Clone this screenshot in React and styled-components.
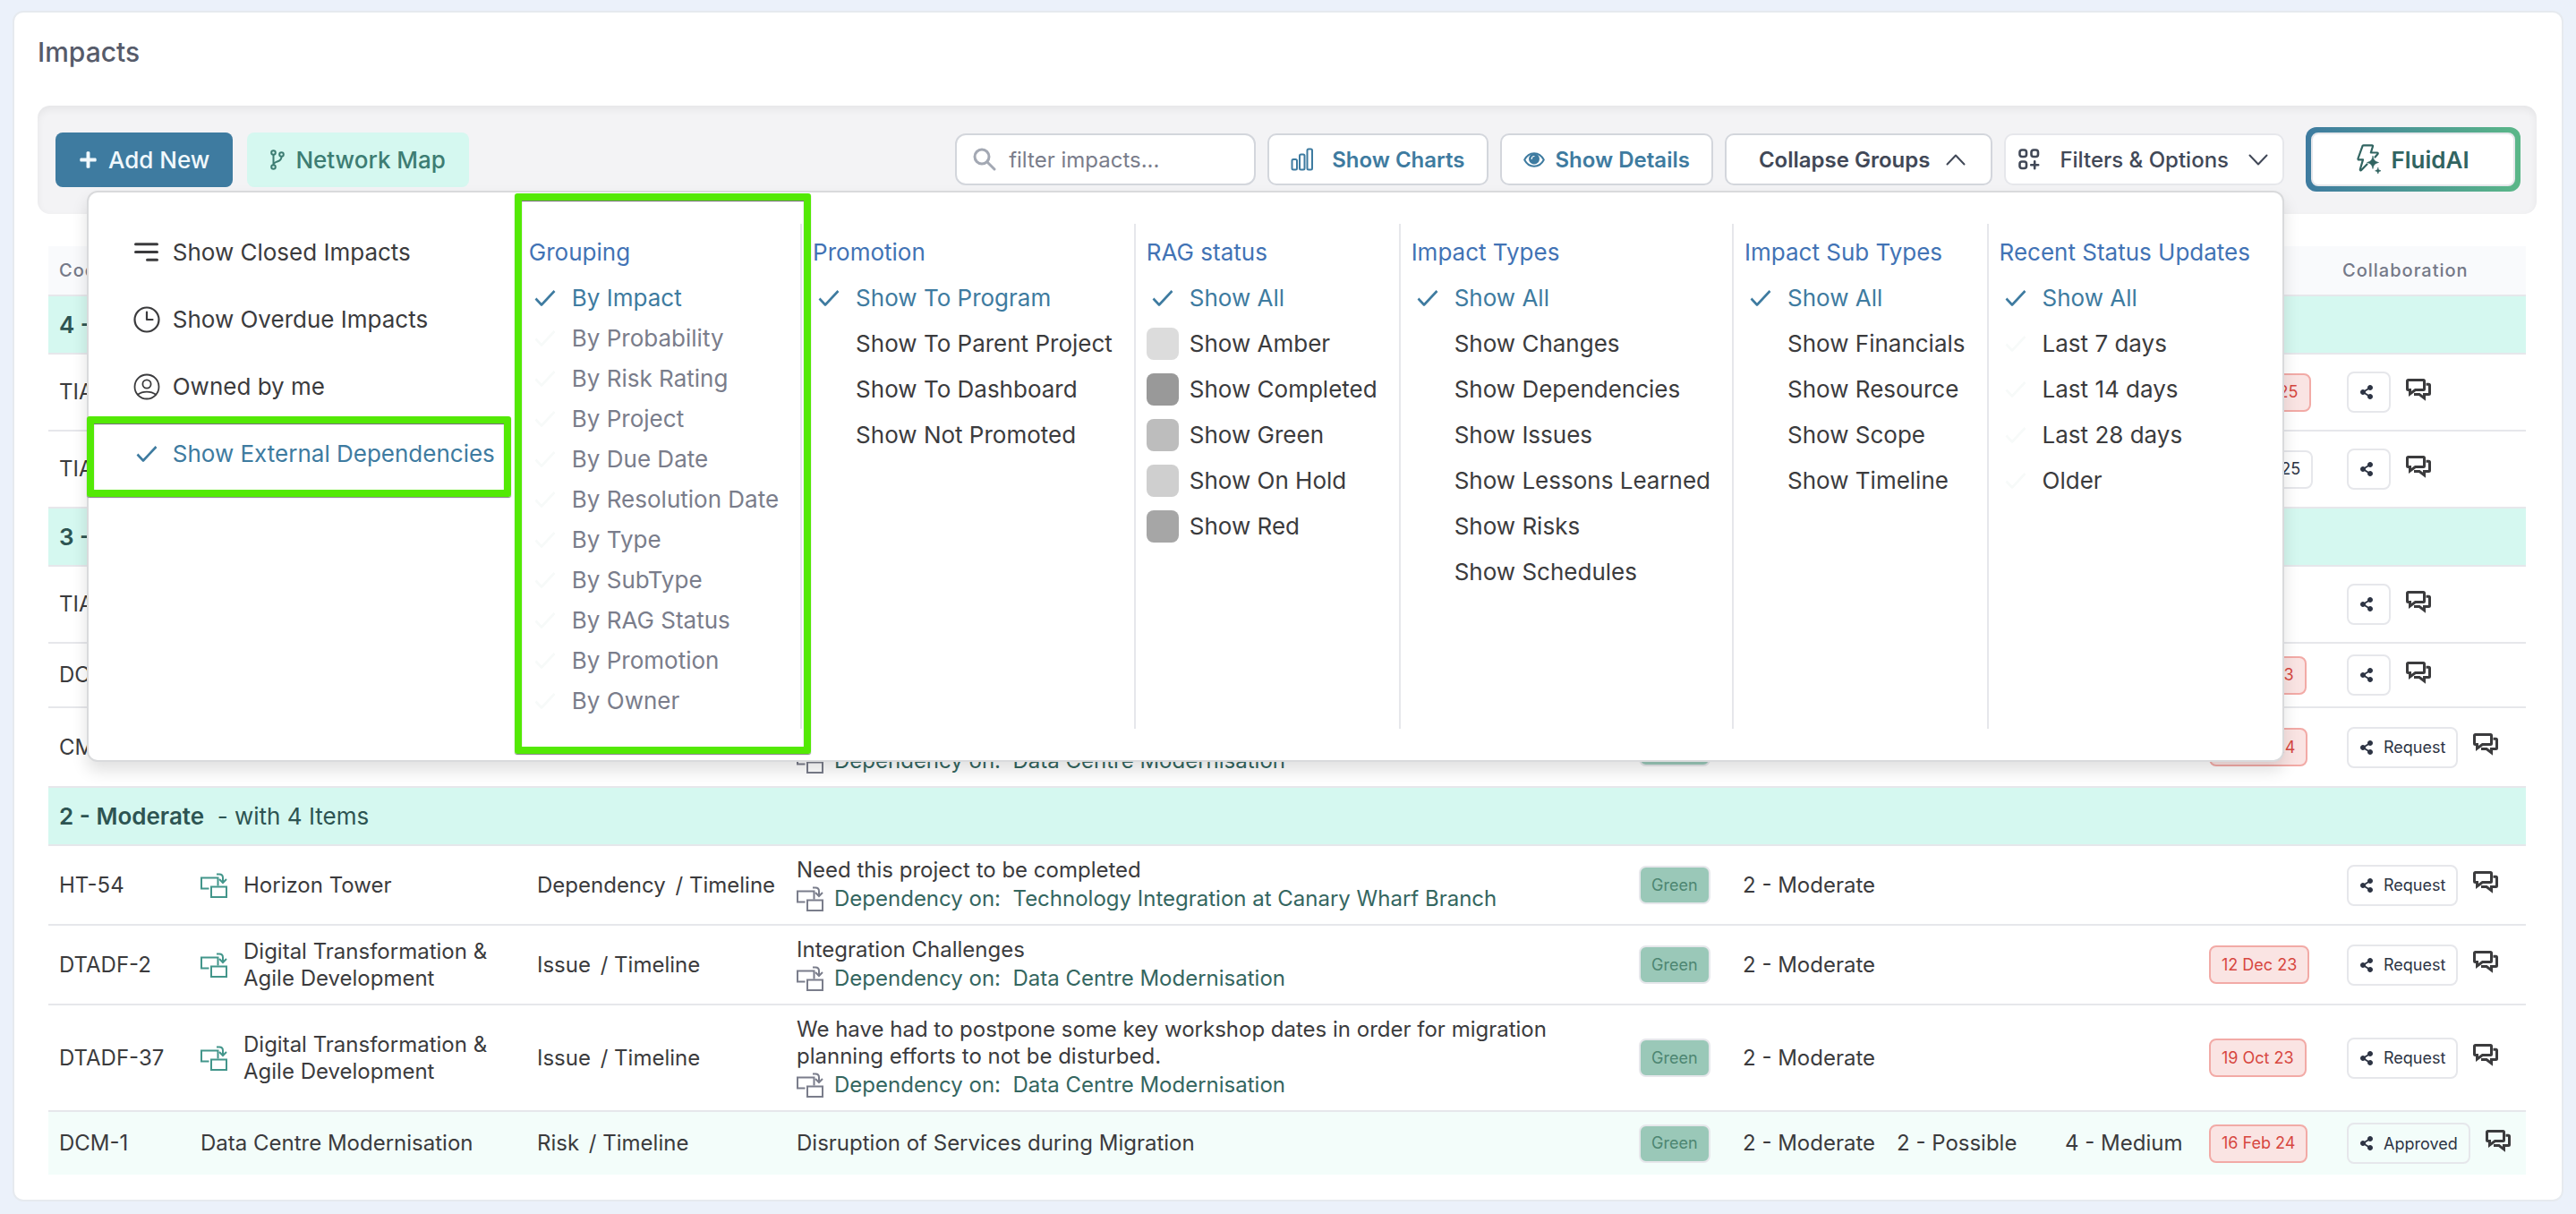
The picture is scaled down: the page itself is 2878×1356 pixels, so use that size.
import React, { useState } from 'react';
import styled, { createGlobalStyle, css } from 'styled-components';
import { FaPlus, FaShareAlt } from 'react-icons/fa';

const GlobalStyle = createGlobalStyle`
  * {
    box-sizing: border-box;
  }

  body {
    margin: 0;
    background: #ebf1fa;
    color: #3b3b3d;
    font-family: Inter, 'Liberation Sans', sans-serif;
    font-size: 24px;
  }

  button,
  input {
    font-family: inherit;
  }

  button {
    cursor: pointer;
  }
`;

// page card
const Page = styled.main`
  margin: 12px 14px;
  padding: 0 28px 28px 26px;
  border: 2px solid #e6eaef;
  border-radius: 12px;
  background: #fff;
`;

const Title = styled.h1`
  margin: 0;
  padding: 26px 0 42px;
  color: #565b6a;
  font-size: 30px;
  font-weight: 500;
  line-height: 36px;
`;

// toolbar
const Toolbar = styled.div`
  display: flex;
  align-items: center;
  justify-content: space-between;
  padding: 24px 18px 25px 20px;
  border-radius: 14px;
  background: #f3f3f5;
  box-shadow: inset 0 4px 8px rgba(0, 0, 0, 0.06);
`;

const ToolbarGroup = styled.div`
  display: flex;
  align-items: center;
  gap: ${({ $gap }) => $gap}px;
`;

const AddButton = styled.button`
  display: flex;
  align-items: center;
  gap: 12px;
  height: 61px;
  padding: 0 26px;
  border: 0;
  border-radius: 8px;
  background: #3e7ba0;
  color: #f0f8fc;
  font-size: 26px;
  font-weight: 500;
`;

const MapButton = styled(AddButton)`
  background: #d5f8f0;
  color: #3d7d73;
`;

const SearchBox = styled.label`
  display: flex;
  align-items: center;
  gap: 14px;
  width: 336px;
  height: 58px;
  padding: 0 18px;
  border: 2px solid #d3d6dc;
  border-radius: 12px;
  background: #fff;
  color: #a3a8b3;

  input {
    flex: 1;
    min-width: 0;
    padding: 0;
    border: 0;
    outline: 0;
    background: none;
    color: #3b3b3d;
    font-size: 24px;
  }

  input::placeholder {
    color: #7a7d8b;
    opacity: 1;
  }
`;

const ToolButton = styled.button`
  display: flex;
  align-items: center;
  justify-content: center;
  gap: ${({ $gap }) => $gap || 12}px;
  height: 58px;
  padding: 0 24px;
  border: 2px solid #d3d6dc;
  border-radius: 10px;
  background: #fff;
  color: ${({ $blue }) => ($blue ? '#3e7ba0' : '#414857')};
  font-size: 24px;
  font-weight: 600;
`;

const CollapseButton = styled(ToolButton)`
  padding: 0 28px 0 36px;
`;

const FilterButton = styled(ToolButton)`
  padding: 0 16px 0 14px;
  border-color: #e6e7eb;
  font-weight: 500;
`;

const FilterWrap = styled.div`
  position: relative;
  margin-right: 11px;
`;

const FluidFrame = styled.div`
  padding: 6px;
  border-radius: 12px;
  background: linear-gradient(90deg, #3e7ba0, #5ab788);
`;

const FluidButton = styled.button`
  display: flex;
  align-items: center;
  justify-content: center;
  gap: 10px;
  width: 228px;
  height: 60px;
  padding: 0;
  border: 2px solid #e6e7eb;
  border-radius: 8px;
  background: #fff;
  color: #316461;
  font-size: 26px;
  font-weight: 600;
`;

// filters panel, hangs under the Filters & Options button
const Panel = styled.div`
  position: absolute;
  top: calc(100% + 6px);
  right: 0;
  z-index: 10;
  display: flex;
  width: max-content;
  padding: 35px 0;
  border: 2px solid #d9dadc;
  border-radius: 12px;
  background: #fff;
  box-shadow: 0 10px 18px rgba(0, 0, 0, 0.12);
`;

const QuickColumn = styled.div`
  display: flex;
  flex-direction: column;
  gap: 24px;
  padding-top: 6px;
`;

const Column = styled.section`
  position: relative;
  min-height: 564px;
  padding: 6px 24px 9px 12px;
  border-right: 2px solid #e6e7eb;

  &:last-child {
    padding-right: 36px;
    border-right: 0;
  }
`;

const ColumnTitle = styled.h2`
  margin: 0;
  color: #4273b5;
  font-size: 26px;
  font-weight: 400;
  line-height: 51px;
`;

const OptionList = styled.div`
  padding-top: ${({ $dense }) => ($dense ? 3 : 0)}px;
`;

const Option = styled.button`
  display: flex;
  align-items: center;
  gap: 12px;
  height: ${({ $dense }) => ($dense ? 45 : 51)}px;
  padding: 0;
  border: 0;
  background: none;
  color: ${({ $active, $dense }) =>
    $active ? '#3e7ba0' : $dense ? '#7a7d8b' : '#3b3b3d'};
  font-size: 26px;
  white-space: nowrap;
`;

const QuickOption = styled(Option)`
  position: relative;
  gap: 14px;
  width: 100%;
  padding: 0 26px 0 50px;
`;

const IconSlot = styled.span`
  display: flex;
  align-items: center;
  justify-content: center;
  width: ${({ $width }) => $width || 36}px;
  color: ${({ $faint }) => ($faint ? '#f7faf9' : 'inherit')};
`;

const Swatch = styled.span`
  width: 36px;
  height: 36px;
  border-radius: 8px;
  background: ${({ $color }) => $color};
`;

// green highlight frames
const frame = css`
  position: absolute;
  border: 8px solid #53e905;
  border-radius: 3px;
  box-shadow: 0 1px 1px rgba(0, 0, 0, 0.5), inset 0 1px 1px rgba(0, 0, 0, 0.6);
  pointer-events: none;
`;

const OptionFrame = styled.span`
  ${frame}
  inset: -16px 8px -23px -2px;
`;

const ColumnFrame = styled.span`
  ${frame}
  z-index: 1;
  inset: -34px -12px -28px -4px;
`;

// table
const Table = styled.table`
  width: calc(100% - 24px);
  margin: 36px 12px 0;
  border-collapse: collapse;
  table-layout: fixed;
`;

const Th = styled.th`
  height: 55px;
  padding: 0 12px;
  border-bottom: 2px solid #e6e7eb;
  background: #f9fafc;
  color: #757988;
  font-size: 20px;
  font-weight: 500;
  letter-spacing: 1px;
  text-align: left;
  white-space: nowrap;
`;

const GroupCell = styled.td`
  height: 65px;
  padding: 0 12px;
  border-bottom: 2px solid #e6e7eb;
  background: #d5f8f0;
  color: #2d5452;
  font-size: 26px;
  white-space: pre;

  strong {
    font-weight: 600;
  }
`;

const Row = styled.tr`
  background: ${({ $own }) => ($own ? '#f3fdfa' : '#fff')};

  &:last-child td {
    border-bottom: 0;
  }
`;

const Td = styled.td`
  height: 71px;
  padding: 12px 0 12px 12px;
  border-bottom: 2px solid #e6e7eb;
  line-height: 30px;
  vertical-align: middle;
`;

const Project = styled.div`
  display: flex;
  align-items: center;
  gap: 18px;
  color: #3b3b3d;

  svg {
    flex: none;
    color: #43968b;
  }
`;

const TypeName = styled.span`
  margin-right: 4px;
`;

const Dependency = styled.div`
  display: flex;
  align-items: center;
  gap: 12px;
  height: 33px;
  color: #7a7d8b;

  span {
    color: #34665f;
    white-space: pre;
  }
`;

const Badge = styled.span`
  display: flex;
  align-items: center;
  justify-content: center;
  width: max-content;
  height: 43px;
  padding: 0 12px;
  border: 2px solid #e6e7eb;
  border-radius: 8px;
  color: #2d3444;
  font-size: 18px;
`;

const StatusBadge = styled(Badge)`
  background: #9ac8b8;
  color: #4d8672;
`;

const LateBadge = styled(Badge)`
  border-color: #f2aaa6;
  background: #fae4e3;
  color: #d7473f;
`;

const Actions = styled.div`
  display: flex;
  align-items: center;
  gap: 17px;
  margin-left: 5px;
`;

const ShareButton = styled.button`
  display: flex;
  align-items: center;
  gap: 11px;
  height: 46px;
  min-width: 49px;
  padding: 0 12px;
  border: 2px solid #e6e7eb;
  border-radius: 8px;
  background: transparent;
  color: #2d3444;
  font-size: 18px;
  font-weight: 400;
`;

const ChatButton = styled.button`
  display: flex;
  padding: 0 0 6px;
  border: 0;
  background: none;
  color: #3b3b3d;
`;

const line = {
  fill: 'none',
  stroke: 'currentColor',
  strokeLinecap: 'round',
  strokeLinejoin: 'round',
};

const BranchIcon = () => (
  <svg width="16" height="23" viewBox="0 0 16 23" {...line} strokeWidth="2">
    <circle cx="3.5" cy="3.5" r="2.3" />
    <circle cx="3.5" cy="19.5" r="2.3" />
    <circle cx="12.5" cy="5.5" r="2.3" />
    <path d="M3.5 6v11M12.5 8c0 5-4 5-6.5 6.2-1.6.7-2.5 1.4-2.5 3" />
  </svg>
);

const SearchIcon = () => (
  <svg width="26" height="26" viewBox="0 0 26 26" {...line} strokeWidth="3">
    <circle cx="10" cy="10" r="8" />
    <path d="M16 16l8 8" />
  </svg>
);

const ChartIcon = () => (
  <svg width="26" height="26" viewBox="0 0 26 26" {...line} strokeWidth="2">
    <rect x="1.5" y="13" width="5.5" height="11.5" rx="1.5" />
    <rect x="10" y="7.5" width="5.5" height="17" rx="1.5" />
    <rect x="18.5" y="1.5" width="5.5" height="23" rx="1.5" />
  </svg>
);

const EyeIcon = () => (
  <svg width="24" height="17" viewBox="0 0 24 17" {...line} strokeWidth="2">
    <path d="M1.2 8.5C3.5 4 7.4 1.2 12 1.2s8.5 2.8 10.8 7.3C20.5 13 16.6 15.8 12 15.8S3.5 13 1.2 8.5z" />
    <circle cx="12" cy="7.5" r="5" fill="currentColor" />
    <path d="M9.2 7.5c0-1.7 1.2-3 2.8-3" stroke="#fff" strokeWidth="1.2" />
  </svg>
);

const ChevronIcon = ({ up }) => (
  <svg width="22" height="13" viewBox="0 0 22 13" {...line} strokeWidth="2">
    <path d={up ? 'M1.5 11.5l9.5-10 9.5 10' : 'M1.5 1.5l9.5 10 9.5-10'} />
  </svg>
);

const FilterIcon = () => (
  <svg width="24" height="24" viewBox="0 0 24 24" {...line} strokeWidth="2.6">
    <rect x="1.5" y="1.5" width="7.5" height="7.5" rx="2.5" />
    <rect x="14.5" y="1.5" width="7.5" height="7.5" rx="2.5" />
    <rect x="1.5" y="14.5" width="7.5" height="7.5" rx="2.5" />
    <path d="M18.2 14.2v8M14.2 18.2h8" />
  </svg>
);

const FluidIcon = () => (
  <svg width="28" height="34" viewBox="0 0 28 34" {...line} strokeWidth="2.2">
    <path d="M20.5 14.5l3-3.5c.5-.7.2-1.5-.7-1.5h-7l2.2-7c.2-.7-.2-1.2-.9-1.2H7.5c-.5 0-.9.3-1 .8L1.5 16c-.2.8.2 1.4 1 1.4H7L3.8 28.2c-.2 1 .7 1.5 1.4.8l6.3-6.5" />
    <path
      d="M18 13.5c.9 4.4 2.4 6 6.5 7-4.1 1-5.6 2.6-6.5 7-.9-4.4-2.4-6-6.5-7 4.1-1 5.6-2.6 6.5-7zM23.8 26.5c.4 2 1.2 2.8 3.2 3.3-2 .5-2.8 1.2-3.2 3.2-.4-2-1.2-2.7-3.2-3.2 2-.5 2.8-1.3 3.2-3.3z"
      fill="currentColor"
      strokeWidth=".6"
    />
  </svg>
);

const LinesIcon = () => (
  <svg width="27" height="21" viewBox="0 0 27 21" {...line} strokeWidth="3">
    <path d="M1.5 1.8h24M1.5 10.5h24M14.5 19.2h11" />
  </svg>
);

const ClockIcon = () => (
  <svg width="30" height="30" viewBox="0 0 30 30" {...line} strokeWidth="2.2">
    <circle cx="15" cy="15" r="13.5" />
    <path d="M15 6.5V15h6.5" />
  </svg>
);

const OwnerIcon = () => (
  <svg width="30" height="30" viewBox="0 0 30 30" {...line} strokeWidth="1.8">
    <circle cx="15" cy="15" r="13.5" />
    <circle cx="15" cy="12" r="4.6" />
    <path d="M4.8 23.8c5.5-4.3 14.9-4.3 20.4 0" />
  </svg>
);

const CheckIcon = () => (
  <svg width="24" height="20" viewBox="0 0 24 20" {...line} strokeWidth="2.6" strokeLinecap="butt">
    <path d="M1.5 10.5l6.5 7L22.5 2" />
  </svg>
);

const LinkIcon = () => (
  <svg width="30" height="28" viewBox="0 0 30 28" {...line} strokeWidth="2" strokeLinecap="butt" strokeLinejoin="miter">
    <path d="M9.5 17.5H1V5.5h18.5v9" />
    <rect x="12" y="15.5" width="17" height="11.5" />
    <path d="M18 1.5h3c2.5 0 4 1.5 4 4V11M21 7l4 4 4-4" />
  </svg>
);

const ChatIcon = () => (
  <svg width="28" height="25" viewBox="0 0 28 25" {...line} strokeWidth="3" strokeLinecap="butt" strokeLinejoin="miter">
    <path d="M2.5 1.5h17a1 1 0 0 1 1 1v9a1 1 0 0 1-1 1h-9L4.5 17v-4.5h-2a1 1 0 0 1-1-1v-9a1 1 0 0 1 1-1z" />
    <path d="M22.5 6.2h3a1 1 0 0 1 1 1v9.3a1 1 0 0 1-1 1h-5v4.2L15 17.5H9" />
  </svg>
);

const quickOptions = [
  { label: 'Show Closed Impacts', Icon: LinesIcon },
  { label: 'Show Overdue Impacts', Icon: ClockIcon },
  { label: 'Owned by me', Icon: OwnerIcon },
  { label: 'Show External Dependencies', Icon: CheckIcon, active: true },
];

const filterColumns = [
  {
    title: 'Grouping',
    dense: true,
    faintChecks: true,
    options: [
      'By Impact',
      'By Probability',
      'By Risk Rating',
      'By Project',
      'By Due Date',
      'By Resolution Date',
      'By Type',
      'By SubType',
      'By RAG Status',
      'By Promotion',
      'By Owner',
    ],
  },
  {
    title: 'Promotion',
    options: [
      'Show To Program',
      'Show To Parent Project',
      'Show To Dashboard',
      'Show Not Promoted',
    ],
  },
  {
    title: 'RAG status',
    options: [
      'Show All',
      'Show Amber',
      'Show Completed',
      'Show Green',
      'Show On Hold',
      'Show Red',
    ],
    swatches: [null, '#dcdcdc', '#999999', '#bdbdbd', '#cfcfcf', '#a6a6a6'],
  },
  {
    title: 'Impact Types',
    options: [
      'Show All',
      'Show Changes',
      'Show Dependencies',
      'Show Issues',
      'Show Lessons Learned',
      'Show Risks',
      'Show Schedules',
    ],
  },
  {
    title: 'Impact Sub Types',
    options: [
      'Show All',
      'Show Financials',
      'Show Resource',
      'Show Scope',
      'Show Timeline',
    ],
  },
  {
    title: 'Recent Status Updates',
    faintChecks: true,
    options: ['Show All', 'Last 7 days', 'Last 14 days', 'Last 28 days', 'Older'],
  },
];

const columnWidths = [158, 376, 290, 941, 116, 172, 188, 161, 149, 217];

const headers = [
  'Code',
  'Project',
  'Type',
  'Description',
  'RAG',
  'Impact',
  'Probability',
  'Rating',
  'Due',
  'Collaboration',
];

const TIACWB = 'Technology Integration at Canary Wharf Branch';
const DTAD = 'Digital Transformation & Agile Development';
const DCM = 'Data Centre Modernisation';

const groups = [
  {
    name: '4 - Major',
    rows: [
      { code: 'TIACWB-2', project: TIACWB, linked: true, type: 'Issue', date: '30 Jan 25', late: true },
      { code: 'TIACWB-5', project: TIACWB, linked: true, type: 'Issue', date: '28 Nov 25' },
    ],
  },
  {
    name: '3 - Significant',
    rows: [
      { code: 'TIACWB-7', project: TIACWB, linked: true, type: 'Risk' },
      { code: 'DCM-4', project: DCM, type: 'Issue', date: '19 Oct 23', late: true },
      {
        code: 'CMP-3',
        project: 'Change Management',
        linked: true,
        type: 'Issue',
        text: 'Resource Constraints',
        dependsOn: DCM,
        rag: 'Green',
        date: '16 Feb 24',
        late: true,
        share: 'Request',
      },
    ],
  },
  {
    name: '2 - Moderate',
    rows: [
      {
        code: 'HT-54',
        project: 'Horizon Tower',
        linked: true,
        type: 'Dependency',
        text: 'Need this project to be completed',
        dependsOn: TIACWB,
        rag: 'Green',
        impact: '2 - Moderate',
        share: 'Request',
      },
      {
        code: 'DTADF-2',
        project: DTAD,
        linked: true,
        type: 'Issue',
        text: 'Integration Challenges',
        dependsOn: DCM,
        rag: 'Green',
        impact: '2 - Moderate',
        date: '12 Dec 23',
        late: true,
        share: 'Request',
      },
      {
        code: 'DTADF-37',
        project: DTAD,
        linked: true,
        type: 'Issue',
        text: 'We have had to postpone some key workshop dates in order for migration planning efforts to not be disturbed.',
        dependsOn: DCM,
        rag: 'Green',
        impact: '2 - Moderate',
        date: '19 Oct 23',
        late: true,
        share: 'Request',
      },
      {
        code: 'DCM-1',
        project: DCM,
        own: true,
        type: 'Risk',
        text: 'Disruption of Services during Migration',
        rag: 'Green',
        impact: '2 - Moderate',
        probability: '2 - Possible',
        rating: '4 - Medium',
        date: '16 Feb 24',
        late: true,
        share: 'Approved',
      },
    ],
  },
];

const FilterColumn = ({ column }) => {
  const [selected, setSelected] = useState(0);

  return (
    <Column>
      <ColumnTitle>{column.title}</ColumnTitle>
      <OptionList $dense={column.dense}>
        {column.options.map((label, index) => (
          <Option
            key={label}
            type="button"
            aria-pressed={selected === index}
            $active={selected === index}
            $dense={column.dense}
            onClick={() => setSelected(index)}
          >
            {column.swatches && column.swatches[index] ? (
              <Swatch $color={column.swatches[index]} />
            ) : (
              <IconSlot $faint={selected !== index}>
                {(selected === index || column.faintChecks) && <CheckIcon />}
              </IconSlot>
            )}
            {label}
          </Option>
        ))}
      </OptionList>
      {column.dense && <ColumnFrame />}
    </Column>
  );
};

const FilterPanel = () => (
  <Panel>
    <QuickColumn>
      {quickOptions.map(({ label, Icon, active }) => (
        <QuickOption key={label} type="button" $active={active}>
          <IconSlot $width={30}>
            <Icon />
          </IconSlot>
          {label}
          {active && <OptionFrame />}
        </QuickOption>
      ))}
    </QuickColumn>
    {filterColumns.map((column) => (
      <FilterColumn key={column.title} column={column} />
    ))}
  </Panel>
);

const ImpactRow = ({ row }) => {
  const DateBadge = row.late ? LateBadge : Badge;

  return (
    <Row $own={row.own}>
      <Td>{row.code}</Td>
      <Td>
        <Project>
          {row.linked && <LinkIcon />}
          {row.project}
        </Project>
      </Td>
      <Td>
        <TypeName>{row.type}</TypeName> / Timeline
      </Td>
      <Td>
        {row.text}
        {row.dependsOn && (
          <Dependency>
            <LinkIcon />
            <span>{`Dependency on:  ${row.dependsOn}`}</span>
          </Dependency>
        )}
      </Td>
      <Td>{row.rag && <StatusBadge>{row.rag}</StatusBadge>}</Td>
      <Td>{row.impact}</Td>
      <Td>{row.probability}</Td>
      <Td>{row.rating}</Td>
      <Td>{row.date && <DateBadge>{row.date}</DateBadge>}</Td>
      <Td>
        <Actions>
          <ShareButton type="button" aria-label={row.share || 'Share'}>
            <FaShareAlt size={16} />
            {row.share}
          </ShareButton>
          <ChatButton type="button" aria-label="Comments">
            <ChatIcon />
          </ChatButton>
        </Actions>
      </Td>
    </Row>
  );
};

const App = () => {
  const [open, setOpen] = useState(true);
  const [query, setQuery] = useState('');

  return (
    <>
      <GlobalStyle />
      <Page>
        <Title>Impacts</Title>
        <Toolbar>
          <ToolbarGroup $gap={16}>
            <AddButton type="button">
              <FaPlus size={21} />
              Add New
            </AddButton>
            <MapButton type="button">
              <BranchIcon />
              Network Map
            </MapButton>
          </ToolbarGroup>
          <ToolbarGroup $gap={13}>
            <SearchBox>
              <SearchIcon />
              <input
                type="text"
                aria-label="filter impacts"
                placeholder="filter impacts..."
                value={query}
                onChange={(e) => setQuery(e.target.value)}
              />
            </SearchBox>
            <ToolButton type="button" $blue $gap={20}>
              <ChartIcon />
              Show Charts
            </ToolButton>
            <ToolButton type="button" $blue>
              <EyeIcon />
              Show Details
            </ToolButton>
            <CollapseButton type="button" $gap={18}>
              Collapse Groups
              <ChevronIcon up />
            </CollapseButton>
            <FilterWrap>
              <FilterButton
                type="button"
                $gap={22}
                aria-expanded={open}
                onClick={() => setOpen(!open)}
              >
                <FilterIcon />
                Filters &amp; Options
                <ChevronIcon />
              </FilterButton>
              {open && <FilterPanel />}
            </FilterWrap>
            <FluidFrame>
              <FluidButton type="button">
                <FluidIcon />
                FluidAI
              </FluidButton>
            </FluidFrame>
          </ToolbarGroup>
        </Toolbar>
        <Table>
          <colgroup>
            {columnWidths.map((width, index) => (
              <col key={headers[index]} style={{ width }} />
            ))}
          </colgroup>
          <thead>
            <tr>
              {headers.map((header) => (
                <Th key={header}>{header}</Th>
              ))}
            </tr>
          </thead>
          <tbody>
            {groups.map((group) => (
              <React.Fragment key={group.name}>
                <tr>
                  <GroupCell colSpan={10}>
                    <strong>{group.name}</strong>
                    {`  - with ${group.rows.length} Items`}
                  </GroupCell>
                </tr>
                {group.rows.map((row) => (
                  <ImpactRow key={row.code} row={row} />
                ))}
              </React.Fragment>
            ))}
          </tbody>
        </Table>
      </Page>
    </>
  );
};

export default App;
